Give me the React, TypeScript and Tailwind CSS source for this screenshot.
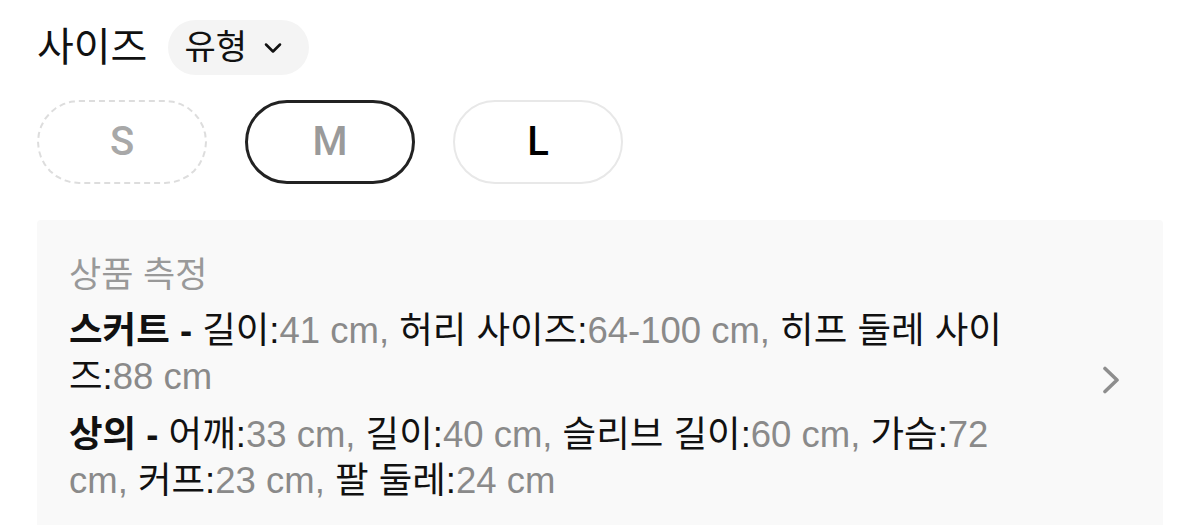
import { ChevronDown } from "lucide-react"

const FONT = "font-['Liberation_Sans','Noto_Sans_CJK_KR',sans-serif]"

type Spec = { label: string; value: string }

const skirt: Spec[] = [
  { label: "길이:", value: "41 cm, " },
  { label: "허리 사이즈:", value: "64-100 cm, " },
  { label: "히프 둘레 사이즈:", value: "88 cm" },
]

const top: Spec[] = [
  { label: "어깨:", value: "33 cm, " },
  { label: "길이:", value: "40 cm, " },
  { label: "슬리브 길이:", value: "60 cm, " },
  { label: "가슴:", value: "72 cm, " },
  { label: "커프:", value: "23 cm, " },
  { label: "팔 둘레:", value: "24 cm" },
]

const SpecLine = ({ title, items }: { title: string; items: Spec[] }) => (
  <p className="text-[36.5px] leading-[46px] text-[#111]">
    <b className="font-bold">{title} - </b>
    {items.map((it) => (
      <span key={it.label}>
        {it.label}
        <span className="text-[#8a8a8a]">{it.value}</span>
      </span>
    ))}
  </p>
)

const sizeBtn =
  "flex h-[84px] w-[170px] items-center justify-center rounded-full font-['Roboto',sans-serif] text-[40px] font-medium"

export default function App() {
  return (
    <div className={`${FONT} h-[525px] w-[1200px] overflow-hidden bg-white px-[37px] pt-[20px]`}>
      <div className="flex items-center gap-[21px]">
        <h2 className="text-[40px] leading-[55px] text-[#111]">사이즈</h2>
        <button className="flex h-[55px] items-center gap-[12px] rounded-full bg-[#f4f4f4] pl-[16px] pr-[22px] text-[34px] text-[#111]">
          유형
          <ChevronDown size={28} strokeWidth={2.2} />
        </button>
      </div>

      <div className="mt-[25px] flex gap-[38px]">
        <button className={`${sizeBtn} border-2 border-dashed border-[#dddddd] text-[#a8a8a8]`}>S</button>
        <button className={`${sizeBtn} border-[3px] border-[#222] text-[#9a9a9a]`}>M</button>
        <button className={`${sizeBtn} border-2 border-[#e8e8e8] text-black`}>L</button>
      </div>

      <div className="mt-[36px] flex items-center rounded-[4px] bg-[#f9f9f9] pb-[33px] pl-[32px] pr-[43px] pt-[35px]">
        <div className="w-[948px]">
          <h3 className="text-[35px] leading-[40px] text-[#999]">상품 측정</h3>
          <div className="mt-[13px] flex flex-col gap-[12px]">
            <SpecLine title="스커트" items={skirt} />
            <SpecLine title="상의" items={top} />
          </div>
        </div>
        <svg className="ml-auto" width="18" height="28" viewBox="0 0 18 28" fill="none">
          <path d="M3 2.5 15 14 3 25.5" stroke="#8e8e8e" strokeWidth="3.6" strokeLinecap="round" strokeLinejoin="round" />
        </svg>
      </div>
    </div>
  )
}
